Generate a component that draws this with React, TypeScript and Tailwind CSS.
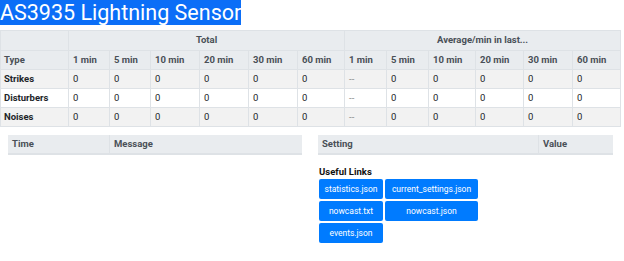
const mins = ["1 min", "5 min", "10 min", "20 min", "30 min", "60 min"];
const widths = [68, 41, 41, 49, 49, 49, 47, 42, 42, 47, 48, 49, 48];

const rows = [
  { type: "Strikes", total: ["0", "0", "0", "0", "0", "0"], avg: ["--", "0", "0", "0", "0", "0"] },
  { type: "Disturbers", total: ["0", "0", "0", "0", "0", "0"], avg: ["--", "0", "0", "0", "0", "0"] },
  { type: "Noises", total: ["0", "0", "0", "0", "0", "0"], avg: ["--", "0", "0", "0", "0", "0"] },
];

const links = ["statistics.json", "current_settings.json", "nowcast.txt", "nowcast.json", "events.json"];

export default function App() {
  return (
    <div
      className="w-[624px] h-[261px] bg-white text-[#212529] overflow-hidden"
      style={{ fontFamily: 'Roboto, "Noto Sans", sans-serif' }}
    >
      <h1 className="h-[26px] leading-[26px] text-[21.5px] font-normal">
        <span className="bg-[#0b6ef7] text-white">AS3935 Lightning Sensor</span>
      </h1>

      <table className="mt-[4px] w-[620px] table-fixed border-collapse text-[9.5px]">
        <colgroup>
          {widths.map((w, i) => (
            <col key={i} style={{ width: w }} />
          ))}
        </colgroup>
        <thead className="bg-[#e9ecef] text-[#495057] font-bold">
          <tr className="h-[20px]">
            <th className="border border-[#dee2e6]"></th>
            <th colSpan={6} className="border border-[#dee2e6] text-center font-bold">
              Total
            </th>
            <th colSpan={6} className="border border-[#dee2e6] text-center font-bold">
              Average/min in last...
            </th>
          </tr>
          <tr className="h-[19px]">
            <th className="border border-[#dee2e6] text-left px-[3px] font-bold">Type</th>
            {[...mins, ...mins].map((m, i) => (
              <th key={i} className="border border-[#dee2e6] text-left px-[4px] font-bold">
                {m}
              </th>
            ))}
          </tr>
        </thead>
        <tbody>
          {rows.map((r, i) => (
            <tr key={r.type} className={`h-[19px] ${i % 2 === 0 ? "bg-[#f2f2f2]" : "bg-white"}`}>
              <td className="border border-[#dee2e6] px-[3px] font-bold">{r.type}</td>
              {r.total.map((v, j) => (
                <td key={j} className="border border-[#dee2e6] px-[4px]">
                  {v}
                </td>
              ))}
              {r.avg.map((v, j) => (
                <td key={j} className={`border border-[#dee2e6] px-[4px] ${v === "--" ? "text-[#888]" : ""}`}>
                  {v}
                </td>
              ))}
            </tr>
          ))}
        </tbody>
      </table>

      <div className="mt-[8px] grid w-[620px] grid-cols-2 text-[9.5px]">
        <div className="pl-[8px] pr-[8px]">
          <div className="flex h-[20px] items-center bg-[#e9ecef] border-b-2 border-[#dee2e6] font-bold text-[#495057]">
            <div className="w-[102px] h-full flex items-center px-[4px] border-r border-[#dee2e6]">Time</div>
            <div className="px-[4px]">Message</div>
          </div>
        </div>
        <div className="pl-[8px] pr-[7px]">
          <div className="flex h-[20px] items-center bg-[#e9ecef] border-b-2 border-[#dee2e6] font-bold text-[#495057]">
            <div className="w-[221px] h-full flex items-center px-[4px] border-r border-[#dee2e6]">Setting</div>
            <div className="px-[4px]">Value</div>
          </div>
          <div className="mt-[11px] pl-[1px] font-bold text-[#111] leading-[12px]">Useful Links</div>
          <div className="mt-[1px] grid grid-cols-[64px_93px] gap-[2px] pl-[1px]">
            {links.map((l) => (
              <a
                key={l}
                className="h-[20px] flex items-center justify-center rounded-[2px] bg-[#007bff] text-white text-[8.5px]"
              >
                {l}
              </a>
            ))}
          </div>
        </div>
      </div>
    </div>
  );
}
